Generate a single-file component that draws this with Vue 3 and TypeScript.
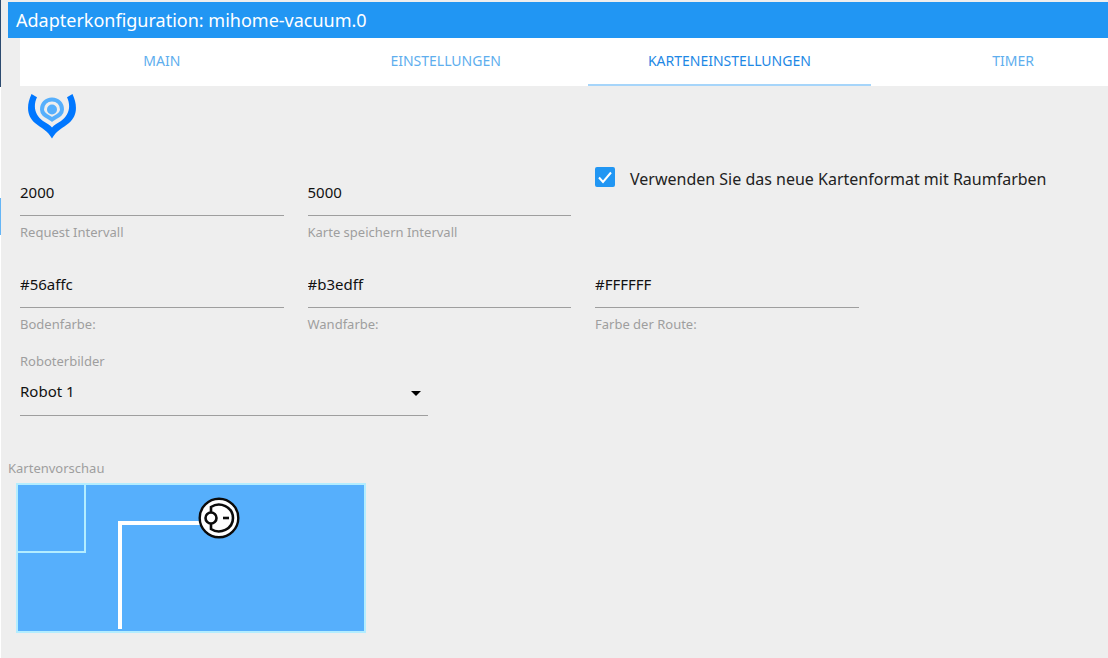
<script setup lang="ts">
import { ref } from 'vue'

interface Tab {
  id: string
  label: string
}

interface Field {
  id: string
  label: string
  value: string
}

const tabs: Tab[] = [
  { id: 'main', label: 'MAIN' },
  { id: 'settings', label: 'EINSTELLUNGEN' },
  { id: 'map', label: 'KARTENEINSTELLUNGEN' },
  { id: 'timer', label: 'TIMER' },
]
const activeTab = ref('map')

const intervals = ref<Field[]>([
  { id: 'request-interval', label: 'Request Intervall', value: '2000' },
  { id: 'save-interval', label: 'Karte speichern Intervall', value: '5000' },
])

const colors = ref<Field[]>([
  { id: 'floor-color', label: 'Bodenfarbe:', value: '#56affc' },
  { id: 'wall-color', label: 'Wandfarbe:', value: '#b3edff' },
  { id: 'path-color', label: 'Farbe der Route:', value: '#FFFFFF' },
])

const newMap = ref(true)
const robot = ref('Robot 1')
</script>

<template>
  <div class="page">
    <div class="edge"><span class="edge-dark"></span><span class="edge-mark"></span></div>
    <div class="dialog">
      <header class="title"><h1>Adapterkonfiguration: mihome-vacuum.0</h1></header>
      <div class="content">
        <nav class="tabs">
          <button
            v-for="tab in tabs"
            :key="tab.id"
            type="button"
            :class="['tab', { active: tab.id === activeTab }]"
            @click="activeTab = tab.id"
          >{{ tab.label }}</button>
        </nav>

        <svg class="logo" width="48" height="46" viewBox="0 0 48 46" aria-hidden="true">
          <path d="M3.500 0 9 3.200C4.500 13 7.500 21.500 15 27C19 29.500 22 31 24 33.500C26 31 29 29.500 33 27C40.500 21.500 43.500 13 39 3.200L44.500 0C50 12 49 22 41 29C35 34 28 37 24 44.500C20 37 13 34 7 29C-1 22-2 12 3.500 0Z" fill="#0077ff" />
          <path d="M24 5.500C30 5.500 34 10 34 15.500C34 21 28 22.500 24 25.500C20 22.500 14 21 14 15.500C14 10 18 5.500 24 5.500Z" fill="none" stroke="#56affc" stroke-width="4" />
          <circle cx="24" cy="15.500" r="5" fill="#56affc" />
        </svg>

        <div class="row first">
          <div v-for="field in intervals" :key="field.id" class="field">
            <input :id="field.id" v-model="field.value" type="text" />
            <label :for="field.id">{{ field.label }}</label>
          </div>
          <div class="check">
            <span class="box">
              <input id="new-map" v-model="newMap" type="checkbox" />
              <svg width="20" height="20" viewBox="0 0 20 20" aria-hidden="true">
                <path d="M4 10.500 8 15 16 5.500" fill="none" stroke="#fff" stroke-width="2" />
              </svg>
            </span>
            <label for="new-map">Verwenden Sie das neue Kartenformat mit Raumfarben</label>
          </div>
        </div>

        <div class="row">
          <div v-for="field in colors" :key="field.id" class="field">
            <input :id="field.id" v-model="field.value" type="text" />
            <label :for="field.id">{{ field.label }}</label>
          </div>
        </div>

        <div class="robot">
          <label for="robot">Roboterbilder</label>
          <div class="select">
            <select id="robot" v-model="robot">
              <option>Robot 1</option>
            </select>
            <svg width="10" height="5" viewBox="0 0 10 5" aria-hidden="true"><path d="M0 0H10L5 5Z" /></svg>
          </div>
        </div>

        <p class="caption">Kartenvorschau</p>
        <svg class="map" width="350" height="150" viewBox="0 0 350 150" role="img">
          <rect x="1" y="1" width="348" height="148" fill="#56affc" stroke="#b3edff" stroke-width="2" />
          <path d="M69 1V69H1" fill="none" stroke="#b3edff" stroke-width="2" />
          <path d="M104 146V40H190" fill="none" stroke="#fff" stroke-width="4" />
          <g fill="#fff" stroke="#0b0b0b">
            <circle cx="203" cy="35" r="19.300" stroke-width="2.400" />
            <path d="M195 29V24C204 18 217 24 217 35C217 46 204 52 195 46V41" stroke-width="2.600" />
            <circle cx="195" cy="35" r="5.500" stroke-width="2.600" />
            <path d="M207 35H213" stroke-width="2.600" />
          </g>
        </svg>
      </div>
    </div>
  </div>
</template>

<style>
body {
  margin: 0;
  background: #eeeeee;
}
</style>

<style scoped>
.page {
  display: flex;
  min-height: 100vh;
  overflow: hidden;
  background: #eeeeee;
  font-family: "Noto Sans", "Open Sans", sans-serif;
  color: #111;
}
.edge {
  display: flex;
  flex-direction: column;
  flex: 0 0 1px;
  background: #fff;
}
.edge-dark {
  height: 87px;
  background: #2c4b70;
}
.edge-mark {
  height: 37px;
  margin-top: 111px;
  background: #64b5f6;
}
.dialog {
  flex: 1;
  min-width: 0;
  padding: 2px 0 0 7px;
}
.title {
  height: 36px;
  padding-left: 8px;
  background: #2196f3;
}
h1 {
  margin: 0;
  font-size: 18px;
  font-weight: 400;
  line-height: 36px;
  color: #fff;
}
.content {
  width: calc(100% + 50px);
}
.tabs {
  display: flex;
  height: 48px;
  margin: 0 3px 0 12px;
  background: #fff;
}
.tab {
  flex: 1;
  padding: 0;
  border: 0;
  border-bottom: 2px solid transparent;
  background: none;
  font: 400 14px/46px "Noto Sans", sans-serif;
  color: #5eaeee;
}
.tab.active {
  border-color: #a6d5fa;
  color: #1e88e5;
}
.logo {
  display: block;
  margin: 8px 0 0 20px;
}
.row {
  display: grid;
  grid-template-columns: repeat(4, 1fr);
  height: 92px;
}
.first {
  margin-top: 30px;
}
.field {
  padding: 0 12px;
}
.field input {
  display: block;
  box-sizing: border-box;
  width: 100%;
  height: 46px;
  padding: 0 0 2px;
  border: 0;
  border-bottom: 1px solid #9e9e9e;
  background: none;
  font: 400 15px "Noto Sans", sans-serif;
  color: #111;
}
label,
.caption {
  font-size: 13px;
  line-height: 20px;
  color: #9e9e9e;
}
.field label {
  display: block;
  padding-top: 6px;
}
.check {
  display: flex;
  grid-column: span 2;
  gap: 15px;
  margin-top: -3px;
  padding-left: 12px;
}
.check label {
  font-size: 16px;
  line-height: 24px;
  color: #222;
}
.box {
  display: grid;
  width: 20px;
  height: 20px;
}
.box > * {
  grid-area: 1 / 1;
}
.box input {
  appearance: none;
  width: 20px;
  height: 20px;
  margin: 0;
  border: 2px solid #5a5a5a;
  border-radius: 2px;
}
.box input:checked {
  border-color: #2196f3;
  background: #2196f3;
}
.box svg {
  pointer-events: none;
}
.robot {
  width: 37.6%;
  box-sizing: border-box;
  margin-top: -3px;
  padding: 0 12px;
}
.robot label {
  display: block;
}
.select {
  display: grid;
  align-items: center;
  border-bottom: 1px solid #9e9e9e;
}
.select > * {
  grid-area: 1 / 1;
}
select {
  appearance: none;
  height: 44px;
  padding: 0 0 4px;
  border: 0;
  background: none;
  font: 400 15px "Noto Sans", sans-serif;
  color: #111;
}
.select svg {
  justify-self: end;
  margin-right: 7px;
  pointer-events: none;
}
.caption {
  margin: 42px 0 5px;
}
.map {
  display: block;
  margin-left: 8px;
}
</style>
